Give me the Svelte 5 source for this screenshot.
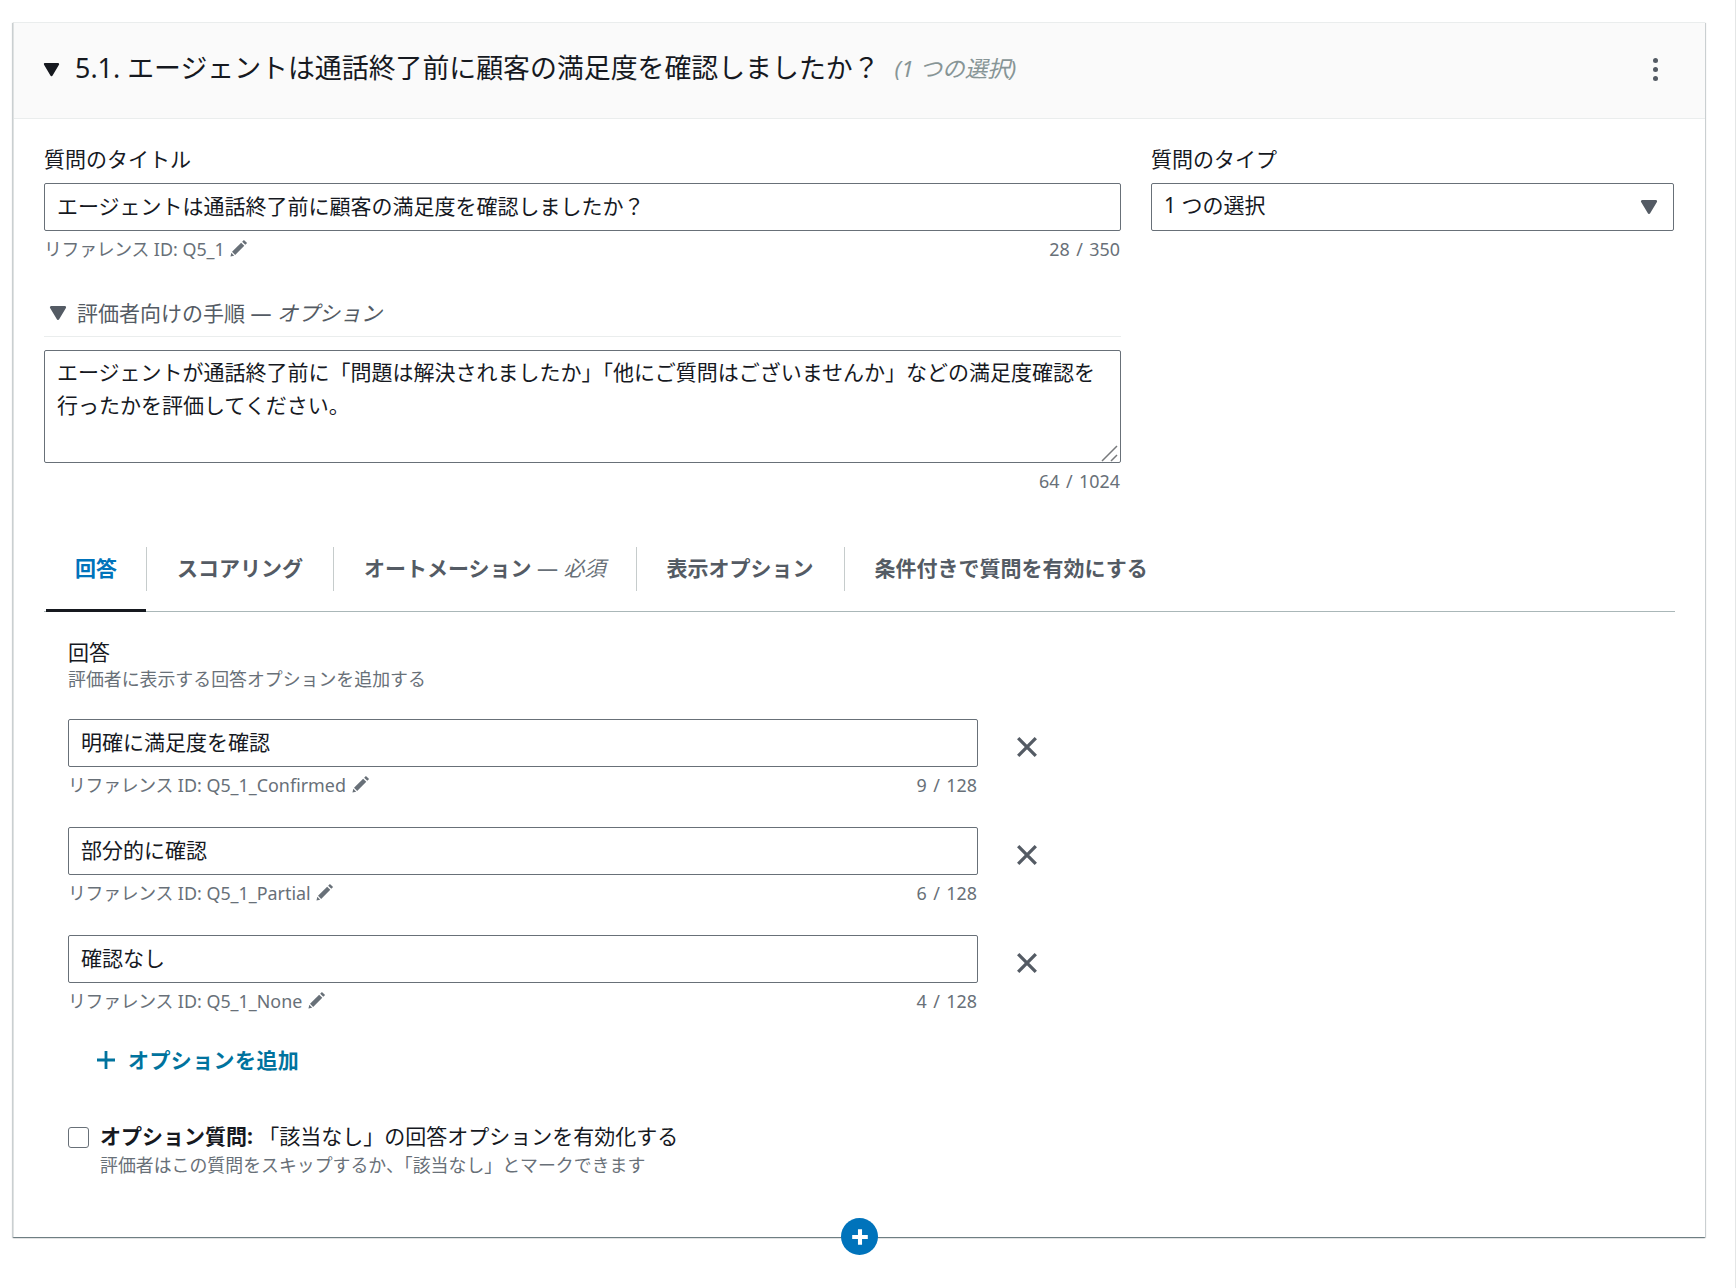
<script lang="ts">
	const options = [
		{ label: '明確に満足度を確認', refId: 'Q5_1_Confirmed', count: '9 / 128' },
		{ label: '部分的に確認', refId: 'Q5_1_Partial', count: '6 / 128' },
		{ label: '確認なし', refId: 'Q5_1_None', count: '4 / 128' }
	];
</script>

{#snippet pencil()}
	<svg class="pencil" viewBox="0 0 16 16" aria-hidden="true">
		<path d="M12.4 0.8 15.2 3.6 13.6 5.2 10.8 2.4ZM9.9 3.3 12.7 6.1 4.6 14.2 1.8 11.4ZM1.2 12.3 3.7 14.8 0.4 15.6Z" />
	</svg>
{/snippet}

{#snippet caret(cls: string)}
	<svg class="caret {cls}" viewBox="0 0 16 14" aria-hidden="true">
		<path d="M2 2H14L8 12Z" />
	</svg>
{/snippet}

<div class="page">
	<section class="card">
		<header class="card-head">
			{@render caret('big')}
			<h2>5.1. エージェントは通話終了前に顧客の満足度を確認しましたか？</h2>
			<em class="type-note">(1 つの選択)</em>
			<span class="dots"><i></i><i></i><i></i></span>
		</header>

		<div class="card-body">
			<div class="top-grid">
				<div>
					<label class="field-label" for="title">質問のタイトル</label>
					<input id="title" class="text" value="エージェントは通話終了前に顧客の満足度を確認しましたか？" />
					<div class="hint-row">
						<span><span class="ref-prefix">リファレンス</span> ID: Q5_1 {@render pencil()}</span>
						<span class="count">28 / 350</span>
					</div>

					<div class="expander">
						{@render caret('small')}
						<span>評価者向けの手順 — <em>オプション</em></span>
					</div>
					<div class="area-wrap">
						<textarea class="area">エージェントが通話終了前に「問題は解決されましたか」「他にご質問はございませんか」などの満足度確認を行ったかを評価してください。</textarea>
						<svg class="grip" viewBox="0 0 18 18" aria-hidden="true">
							<path d="M1 17 16 2M10 17 16 11" />
						</svg>
					</div>
					<div class="hint-row end"><span class="count">64 / 1024</span></div>
				</div>

				<div class="type-col">
					<label class="field-label" for="kind">質問のタイプ</label>
					<div class="select-wrap">
						<select id="kind" class="text">
							<option>1 つの選択</option>
						</select>
						{@render caret('select-caret')}
					</div>
				</div>
			</div>

			<nav class="tabs">
				<a class="tab active" href="#answers">回答</a>
				<a class="tab" href="#scoring">スコアリング</a>
				<a class="tab" href="#automation">オートメーション <span class="tab-note">— <em>必須</em></span></a>
				<a class="tab" href="#display">表示オプション</a>
				<a class="tab" href="#conditions">条件付きで質問を有効にする</a>
			</nav>

			<div class="panel" id="answers">
				<div class="panel-title">回答</div>
				<div class="panel-desc">評価者に表示する回答オプションを追加する</div>

				<div class="option-list">
					{#each options as opt}
						<div class="option">
							<div class="option-main">
								<input class="text" value={opt.label} />
								<div class="hint-row">
									<span><span class="ref-prefix">リファレンス</span> ID: {opt.refId} {@render pencil()}</span>
									<span class="count">{opt.count}</span>
								</div>
							</div>
							<button class="remove" aria-label="削除">
								<svg viewBox="0 0 20 20"><path d="M2 2 18 18M18 2 2 18" /></svg>
							</button>
						</div>
					{/each}
				</div>

				<button class="add">
					<svg viewBox="0 0 20 20"><path d="M10 1V19M1 10H19" /></svg>
					<span class="add-text">オプションを追加</span>
				</button>

				<div class="check-row">
					<span class="box"></span>
					<div>
						<div class="check-label"><strong>オプション質問:</strong> 「該当なし」の回答オプションを有効化する</div>
						<div class="check-desc">評価者はこの質問をスキップするか、「該当なし」とマークできます</div>
					</div>
				</div>
			</div>
		</div>

		<button class="add-question" aria-label="質問を追加">
			<svg viewBox="0 0 20 20"><path d="M10 3.5V16.5M3.5 10H16.5" /></svg>
		</button>
	</section>
</div>

<style>
	:global(body) {
		margin: 0;
		background: #fff;
		color: #16191f;
		font-family: 'Noto Sans', 'Noto Sans CJK JP', sans-serif;
		font-size: 21px;
	}

	.page {
		box-sizing: border-box;
		height: 1288px;
		padding: 22px 30px 0 13px;
		border-right: 1px solid #e4e6e6;
	}

	.card {
		position: relative;
		box-sizing: border-box;
		height: 1215px;
		background: #fff;
		border-top: 1px solid #eaeded;
		border-left: 1px solid #dfe2e2;
		box-shadow:
			0 1px 1px 0 rgba(0, 28, 36, 0.4),
			1px 1px 1px 0 rgba(0, 28, 36, 0.15),
			-1px 1px 1px 0 rgba(0, 28, 36, 0.15);
	}

	.card-head {
		display: flex;
		align-items: center;
		height: 96px;
		padding: 0 47px 6px 29px;
		box-sizing: border-box;
		background: #fafafa;
		border-bottom: 1px solid #eaeded;
	}

	.card-head h2 {
		margin: 0 0 0 15px;
		font-size: 26.9px;
		font-weight: 400;
		line-height: 36px;
	}

	.type-note {
		margin-left: 15px;
		color: #879596;
		font-size: 22.6px;
	}

	.dots {
		display: flex;
		flex-direction: column;
		gap: 4px;
		margin: 3px 0 0 auto;
	}

	.dots i {
		width: 5px;
		height: 5px;
		border-radius: 50%;
		background: #545b64;
	}

	.caret {
		display: block;
		flex: none;
		stroke-width: 2.4;
		stroke-linejoin: round;
	}

	.caret.big {
		width: 17px;
		height: 15px;
		margin-top: 3px;
		fill: #16191f;
		stroke: #16191f;
	}

	.caret.small {
		width: 18px;
		height: 16px;
		fill: #545b64;
		stroke: #545b64;
	}

	.card-body {
		padding: 26px 30px 0 30px;
	}

	.top-grid {
		display: grid;
		grid-template-columns: 1077px 1fr;
		gap: 30px;
	}

	.type-col {
		margin-right: 1px;
	}

	.field-label {
		display: block;
		margin-bottom: 10px;
		line-height: 28px;
	}

	.text {
		display: block;
		box-sizing: border-box;
		width: 100%;
		height: 48px;
		padding: 0 12px 4px;
		border: 1px solid #687078;
		border-radius: 2px;
		background: #fff;
		color: #16191f;
		font: inherit;
		outline: none;
	}

	select.text {
		appearance: none;
	}

	.select-wrap {
		position: relative;
	}

	:global(.select-caret) {
		position: absolute;
		top: 16px;
		right: 16px;
		width: 18px;
		height: 16px;
		fill: #545b64;
		stroke: #545b64;
	}

	.hint-row {
		display: flex;
		justify-content: space-between;
		margin-top: 6px;
		padding-right: 1px;
		color: #687078;
		font-size: 17.9px;
		line-height: 24px;
	}

	.hint-row.end {
		justify-content: flex-end;
		margin-top: 6px;
	}

	.ref-prefix {
		letter-spacing: -0.3px;
	}

	.count {
		word-spacing: 1.8px;
	}

	.pencil {
		width: 18px;
		height: 18px;
		margin-left: 1px;
		vertical-align: -1px;
		fill: #687078;
	}

	.expander {
		display: flex;
		align-items: center;
		gap: 10px;
		margin-top: 38px;
		padding: 0 0 9px 5px;
		border-bottom: 1px solid #eaeded;
		color: #545b64;
		line-height: 28px;
	}

	.area-wrap {
		position: relative;
		margin-top: 13px;
	}

	.area {
		display: block;
		box-sizing: border-box;
		width: 100%;
		height: 113px;
		padding: 5px 12px;
		border: 1px solid #687078;
		border-radius: 2px;
		color: #16191f;
		font: inherit;
		line-height: 33px;
		outline: none;
		resize: none;
	}

	.grip {
		position: absolute;
		right: 2px;
		bottom: 1px;
		width: 18px;
		height: 18px;
		fill: none;
		stroke: #77797c;
		stroke-width: 1.5;
	}

	.tabs {
		position: relative;
		display: flex;
		margin-top: 54px;
		padding: 0 0 20px 2px;
		border-bottom: 1.5px solid #aab7b8;
	}

	.tab {
		display: block;
		height: 44px;
		padding: 0 30px;
		border-left: 1px solid #c6cccc;
		color: #545b64;
		font-weight: 700;
		line-height: 42px;
		text-decoration: none;
		white-space: nowrap;
	}

	.tab:first-child {
		border-left: 0;
	}

	.tab-note {
		color: #687078;
		font-weight: 400;
	}

	.tab.active {
		position: relative;
		width: 100px;
		box-sizing: border-box;
		padding: 0;
		text-align: center;
		color: #0073bb;
	}

	.tab.active::after {
		content: '';
		position: absolute;
		left: 0;
		right: 0;
		top: 62px;
		height: 3px;
		background: #16191f;
	}

	.panel {
		padding: 26px 0 0 24px;
	}

	.panel-title {
		line-height: 28px;
	}

	.panel-desc {
		color: #687078;
		font-size: 17.9px;
		line-height: 27px;
	}

	.option-list {
		display: flex;
		flex-direction: column;
		gap: 30px;
		margin-top: 26px;
	}

	.option {
		display: flex;
		align-items: flex-start;
	}

	.option-main {
		width: 910px;
	}

	.remove {
		width: 22px;
		height: 22px;
		margin: 17px 0 0 38px;
		padding: 0;
		border: 0;
		background: none;
	}

	.remove svg {
		display: block;
		width: 22px;
		height: 22px;
		fill: none;
		stroke: #545b64;
		stroke-width: 3;
	}

	.add {
		display: flex;
		align-items: center;
		gap: 12px;
		margin: 31px 0 0 28px;
		padding: 0;
		border: 0;
		background: none;
		color: #00739e;
		font: inherit;
		font-weight: 700;
		line-height: 32px;
	}

	.add-text {
		letter-spacing: 0.4px;
	}

	.add svg {
		width: 20px;
		height: 20px;
		fill: none;
		stroke: #00739e;
		stroke-width: 2.8;
	}

	.check-row {
		display: flex;
		gap: 11px;
		margin-top: 45px;
	}

	.box {
		box-sizing: border-box;
		width: 21px;
		height: 21px;
		margin-top: 6px;
		border: 1.5px solid #687078;
		border-radius: 3px;
	}

	.check-label {
		line-height: 30px;
	}

	.check-desc {
		color: #687078;
		font-size: 17.9px;
		line-height: 28px;
	}

	.add-question {
		position: absolute;
		left: 827px;
		bottom: -18px;
		display: flex;
		align-items: center;
		justify-content: center;
		width: 37px;
		height: 37px;
		padding: 0;
		border: 0;
		border-radius: 50%;
		background: #0073bb;
	}

	.add-question svg {
		width: 24px;
		height: 24px;
		fill: none;
		stroke: #fff;
		stroke-width: 3.4;
	}
</style>
